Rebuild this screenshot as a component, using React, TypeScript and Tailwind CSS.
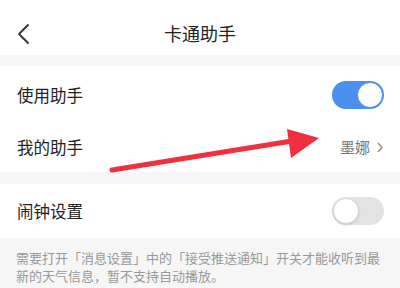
import React from 'react';

const Toggle: React.FC<{ on: boolean }> = ({ on }) => (
    <div className={`w-[52px] h-[28px] rounded-full p-[1px] flex ${on ? 'bg-[#4a90ee] justify-end' : 'bg-[#e3e3e3] justify-start'}`}>
        <div className={`w-[26px] h-[26px] rounded-full bg-white ${on ? 'border border-[#4a90ee]' : 'border border-[#d8d8d8] shadow-sm'}`} />
    </div>
);

export default function App() {
    return (
        <div className="w-[400px] h-[288px] bg-white relative overflow-hidden text-[#222]" style={{ fontFamily: '"Noto Sans CJK SC", "Noto Sans", sans-serif' }}>
            <div className="h-[55px] flex items-center relative">
                <svg className="absolute left-[16px] top-[23px]" width="16" height="22" viewBox="0 0 16 22">
                    <path d="M12 2 L3 11 L12 20" fill="none" stroke="#333" strokeWidth="1.8" strokeLinecap="round" strokeLinejoin="round" />
                </svg>
                <div className="w-full text-center text-[18px] pt-[12px]">卡通助手</div>
            </div>
            <div className="h-[11px] bg-[#f6f6f6]" />
            <div className="h-[56px] flex items-center justify-between pl-[17px] pr-[16px] pt-[2px]">
                <span className="text-[16.5px]">使用助手</span>
                <Toggle on />
            </div>
            <div className="h-[50px] flex items-center justify-between pl-[17px] pr-[17px]">
                <span className="text-[16.5px]">我的助手</span>
                <span className="flex items-center gap-[7px] text-[15px] text-[#777]">
                    墨娜
                    <svg width="6" height="11" viewBox="0 0 6 11">
                        <path d="M1 1 L5 5.5 L1 10" fill="none" stroke="#888" strokeWidth="1.3" />
                    </svg>
                </span>
            </div>
            <div className="h-[12px] bg-[#f6f6f6]" />
            <div className="h-[54px] flex items-center justify-between pl-[17px] pr-[16px]">
                <span className="text-[16.5px]">闹钟设置</span>
                <Toggle on={false} />
            </div>
            <div className="bg-[#f6f6f6] h-[60px] px-[16px] pt-[11px] text-[13px] leading-[18px] text-[#999]">
                需要打开「消息设置」中的「接受推送通知」开关才能收听到最新的天气信息，暂不支持自动播放。
            </div>
            <svg className="absolute left-0 top-0 pointer-events-none" width="400" height="288" viewBox="0 0 400 288">
                <path d="M112 170 L292 141" stroke="#f0303f" strokeWidth="5" strokeLinecap="round" />
                <path d="M287 129 L319 138 L291 158 Z" fill="#f0303f" />
            </svg>
        </div>
    );
}
